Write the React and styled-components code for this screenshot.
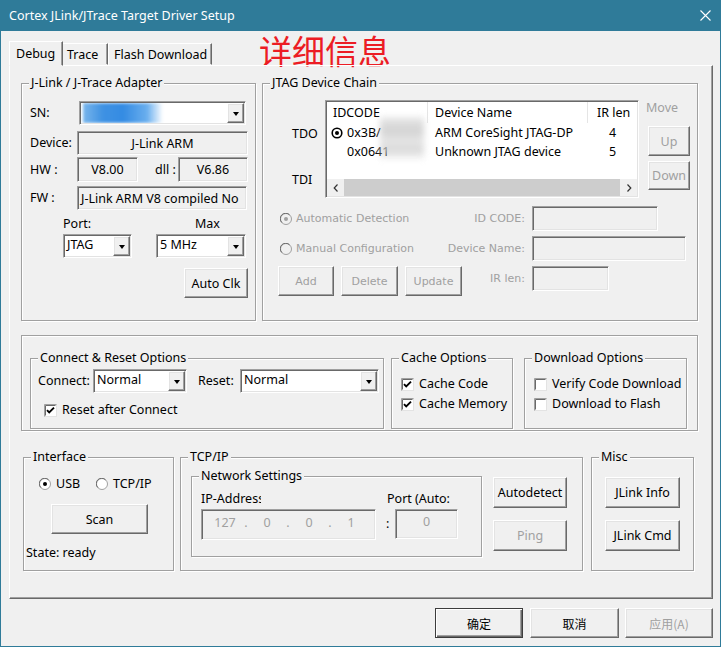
import React from "react";
import styled, { createGlobalStyle, css } from "styled-components";

const GlobalStyle = createGlobalStyle`
  html, body { margin: 0; padding: 0; background: #f0f0f0; }
  body {
    font-family: "Noto Sans", "Noto Sans CJK SC", sans-serif;
    font-size: 12.5px;
    color: #000;
  }
  * { box-sizing: border-box; }
`;

const raised = css`
  border: 1px solid;
  border-color: #fff #696969 #696969 #fff;
  box-shadow: inset -1px -1px #a0a0a0, inset 1px 1px #e3e3e3;
`;

const sunken = css`
  border: 1px solid;
  border-color: #a0a0a0 #fff #fff #a0a0a0;
  box-shadow: inset 1px 1px #696969, inset -1px -1px #e3e3e3;
`;

const Window = styled.div`
  width: 721px;
  height: 647px;
  background: #f0f0f0;
  border: 1px solid #2f7b99;
  border-top: none;
  display: flex;
  flex-direction: column;
`;

const TitleBar = styled.div`
  height: 31px;
  flex: none;
  background: #2f7b99;
  color: #fff;
  display: flex;
  align-items: center;
  justify-content: space-between;
  padding: 0 9px 0 8px;
  font-size: 12.5px;
`;

const Body = styled.div`
  padding: 9px 8px 0 8px;
  display: flex;
  flex-direction: column;
`;

const TabStrip = styled.div`
  display: flex;
  align-items: flex-end;
  height: 25px;
`;

const Tab = styled.div`
  position: relative;
  z-index: ${p => (p.$active ? 1 : 0)};
  width: ${p => p.$w}px;
  height: ${p => (p.$active ? 25 : 22)}px;
  margin-bottom: ${p => (p.$active ? -1 : 0)}px;
  margin-left: ${p => p.$ml || 0}px;
  padding-left: ${p => p.$pl}px;
  background: #f0f0f0;
  border: 1px solid;
  border-color: #fff #696969 transparent #fff;
  box-shadow: inset -1px 0 #a0a0a0;
  display: flex;
  align-items: center;
  padding-top: ${p => (p.$active ? 0 : 1)}px;
  white-space: nowrap;
`;

const Annotation = styled.div`
  margin-left: 47px;
  margin-bottom: 2px;
  font-family: "Noto Sans CJK SC", sans-serif;
  font-size: 33px;
  line-height: 25px;
  color: #ec1c24;
`;

const Panel = styled.div`
  width: 704px;
  height: 534px;
  border: 1px solid;
  border-color: #fff #696969 #696969 #fff;
  box-shadow: inset -1px -1px #a0a0a0;
  padding: 17px 0 0 11px;
  display: flex;
  flex-direction: column;
`;

const Row = styled.div`
  display: flex;
  margin-top: ${p => p.$mt || 0}px;
  margin-left: ${p => p.$ml || 0}px;
`;

const Group = styled.div`
  position: relative;
  flex: none;
  width: ${p => p.$w}px;
  height: ${p => p.$h}px;
  margin-left: ${p => p.$ml || 0}px;
  margin-top: ${p => p.$mt || 0}px;
  border: 1px solid #a0a0a0;
  box-shadow: inset 1px 1px #fff, 1px 1px #fff;
  padding: ${p => p.$pad || "0"};
  display: flex;
  flex-direction: ${p => p.$dir || "column"};
  align-items: flex-start;
`;

const Legend = styled.span`
  position: absolute;
  top: -9px;
  left: 7px;
  padding: 0 2px;
  line-height: 16px;
  background: #f0f0f0;
  white-space: nowrap;
`;

const FormRow = styled.div`
  display: flex;
  align-items: center;
  margin-top: ${p => p.$mt || 0}px;
  margin-left: ${p => p.$ml || 0}px;
`;

const Label = styled.span`
  width: ${p => (p.$w ? `${p.$w}px` : "auto")};
  margin-left: ${p => p.$ml || 0}px;
  margin-top: ${p => p.$mt || 0}px;
  flex: none;
  line-height: ${p => p.$lh || 16}px;
  white-space: nowrap;
  overflow: ${p => (p.$clip ? "hidden" : "visible")};
  text-align: ${p => p.$align || "left"};
  color: ${p => (p.$off ? "#a0a0a0" : "#000")};
  font-family: ${p => (p.$classic ? '"DejaVu Sans", sans-serif' : "inherit")};
  font-size: ${p => (p.$classic ? "11px" : "inherit")};
  padding-right: ${p => p.$pr || 0}px;
  padding-left: ${p => p.$pl || 0}px;
  align-self: ${p => p.$self || "auto"};
`;

const Field = styled.div`
  ${sunken};
  flex: none;
  width: ${p => p.$w}px;
  height: ${p => p.$h || 24}px;
  margin-left: ${p => p.$ml || 0}px;
  margin-top: ${p => p.$mt || 0}px;
  align-self: ${p => p.$self || "auto"};
  background: ${p => p.$bg || "#f0f0f0"};
  display: flex;
  align-items: ${p => p.$valign || "center"};
  justify-content: ${p => (p.$center ? "center" : "flex-start")};
  padding: ${p => p.$pad || "0 3px"};
  overflow: hidden;
  white-space: nowrap;
  color: ${p => (p.$off ? "#a0a0a0" : "#000")};
`;

const Combo = styled.div`
  ${sunken};
  flex: none;
  width: ${p => p.$w}px;
  height: 24px;
  margin-left: ${p => p.$ml || 0}px;
  background: #fff;
  padding: 1px;
  display: flex;
`;

const ComboText = styled.span`
  flex: 1;
  padding-left: 2px;
  line-height: 18px;
  white-space: nowrap;
  overflow: hidden;
`;

const DropButton = styled.span`
  ${raised};
  flex: none;
  width: 17px;
  background: #f0f0f0;
  display: flex;
  align-items: center;
  justify-content: center;
  &::after {
    content: "";
    border-left: 3.5px solid transparent;
    border-right: 3.5px solid transparent;
    border-top: 4px solid #000;
    margin-top: 1px;
  }
`;

const Button = styled.button`
  ${raised};
  flex: none;
  width: ${p => p.$w}px;
  height: ${p => p.$h || 30}px;
  margin-top: ${p => p.$mt || 0}px;
  margin-left: ${p => p.$ml || 0}px;
  padding: 0;
  background: #f0f0f0;
  font-family: ${p => (p.$classic ? '"DejaVu Sans", sans-serif' : '"Noto Sans", "Noto Sans CJK SC", sans-serif')};
  font-size: ${p => (p.$classic ? "11px" : "12.5px")};
  color: ${p => (p.$off ? "#a0a0a0" : "#000")};
  ${p =>
    p.$default &&
    css`
      border: 1px solid #3c3c3c;
      box-shadow: inset 1px 1px #fff, inset -1px -1px #696969, inset -2px -2px #a0a0a0;
    `}
`;

const ChineseButton = styled(Button)`
  font-family: "Noto Sans CJK SC", sans-serif;
  font-size: 12px;
`;

const Blur = styled.span`
  display: inline-block;
  width: 80px;
  height: 20px;
  vertical-align: top;
  background: linear-gradient(90deg, #6aaeea 0%, #2a86e0 25%, #1f7fe0 50%, #5aa6ec 80%, rgba(200, 225, 250, 0) 100%);
  filter: blur(1.5px);
  opacity: 0.9;
`;

const Smudge = styled.span`
  position: absolute;
  left: 53px;
  top: -6px;
  width: 44px;
  height: 44px;
  background: linear-gradient(180deg, #e2e2e2 0%, #c4c4c4 30%, #dedede 55%, #cccccc 75%, rgba(240, 240, 240, 0) 100%);
  filter: blur(3px);
  opacity: 0.75;
`;

/* ---------- icons ---------- */

const CloseIcon = () => (
  <svg width="11" height="11" viewBox="0 0 11 11">
    <path d="M0.5 0.5L10.5 10.5M10.5 0.5L0.5 10.5" stroke="#fff" strokeWidth="1.1" />
  </svg>
);

const RadioIcon = ({ checked, off }) => (
  <svg width="12" height="12" viewBox="0 0 12 12" style={{ flex: "none" }}>
    <circle cx="6" cy="6" r="5.5" fill={off ? "#f0f0f0" : "#fff"} stroke="#a0a0a0" />
    <path d="M1.8 9.5A5 5 0 0 1 9.5 1.8" stroke="#696969" fill="none" />
    {checked && <circle cx="6" cy="6" r="2" fill={off ? "#a0a0a0" : "#000"} />}
  </svg>
);

const ListRadio = () => (
  <svg width="12" height="12" viewBox="0 0 12 12" style={{ flex: "none" }}>
    <circle cx="6" cy="6" r="4.8" fill="#fff" stroke="#000" strokeWidth="1.6" />
    <circle cx="6" cy="6" r="2" fill="#000" />
  </svg>
);

const CheckIcon = ({ checked }) => (
  <svg width="13" height="13" viewBox="0 0 13 13" style={{ flex: "none" }}>
    <rect x="0.5" y="0.5" width="12" height="12" fill="#fff" stroke="#e3e3e3" />
    <path d="M0.5 12.5V0.5H12.5" stroke="#a0a0a0" fill="none" />
    <path d="M1.5 11.5V1.5H11.5" stroke="#696969" fill="none" />
    {checked && <path d="M3 6.2L5.2 8.4L10 3.6" stroke="#000" strokeWidth="1.9" fill="none" />}
  </svg>
);

const Chevron = ({ dir }) => (
  <svg width="6" height="8" viewBox="0 0 6 8">
    <path d={dir === "left" ? "M4.5 0.5L1.2 4L4.5 7.5" : "M1.5 0.5L4.8 4L1.5 7.5"} stroke="#333" strokeWidth="1.2" fill="none" />
  </svg>
);

/* ---------- composite controls ---------- */

const ComboBox = ({ w, ml, children }) => (
  <Combo $w={w} $ml={ml}>
    <ComboText>{children}</ComboText>
    <DropButton />
  </Combo>
);

const OptionItem = styled.label`
  display: flex;
  align-items: center;
  gap: ${p => p.$gap || 5}px;
  width: ${p => (p.$w ? `${p.$w}px` : "auto")};
  margin-top: ${p => p.$mt || 0}px;
  margin-left: ${p => p.$ml || 0}px;
  line-height: 16px;
  white-space: nowrap;
  color: ${p => (p.$off ? "#a0a0a0" : "#000")};
  font-family: ${p => (p.$classic ? '"DejaVu Sans", sans-serif' : "inherit")};
  font-size: ${p => (p.$classic ? "11px" : "inherit")};
`;

/* ---------- list view ---------- */

const ListView = styled.div`
  ${sunken};
  width: 314px;
  height: 98px;
  background: #fff;
  padding: 1px;
  display: flex;
  flex-direction: column;
`;

const ListHeader = styled.div`
  display: flex;
  height: 21px;
  flex: none;
`;

const HeadCell = styled.div`
  width: ${p => p.$w}px;
  flex: ${p => (p.$grow ? 1 : "none")};
  padding-left: ${p => p.$pl}px;
  border-right: ${p => (p.$grow ? "none" : "1px solid #e5e5e5")};
  display: flex;
  align-items: center;
`;

const ListBody = styled.div`
  flex: 1;
  position: relative;
`;

const ListRow = styled.div`
  display: flex;
  height: 19px;
  align-items: center;
`;

const Cell = styled.div`
  width: ${p => p.$w}px;
  flex: ${p => (p.$grow ? 1 : "none")};
  padding-left: ${p => p.$pl || 0}px;
  display: flex;
  align-items: center;
  gap: 4px;
  justify-content: ${p => (p.$center ? "center" : "flex-start")};
  white-space: nowrap;
`;

const HScroll = styled.div`
  height: 17px;
  flex: none;
  background: #f0f0f0;
  display: flex;
`;

const ScrollArrow = styled.div`
  width: 17px;
  flex: none;
  display: flex;
  align-items: center;
  justify-content: center;
`;

const ScrollThumb = styled.div`
  flex: 1;
  background: #cdcdcd;
`;

/* ---------- layout specific ---------- */

const SideLabels = styled.div`
  width: 33px;
  padding-top: 26px;
  display: flex;
  flex-direction: column;
  line-height: 16px;
  gap: 30px;
`;

const MoveColumn = styled.div`
  margin-left: 7px;
  display: flex;
  flex-direction: column;
  align-items: flex-start;
`;

const ChainForm = styled.div`
  display: grid;
  grid-template-columns: 162px 92px auto;
  grid-template-rows: 25px 25px 30px;
  row-gap: 5px;
  align-items: center;
  margin-top: 8px;
  margin-left: 15px;
`;

const ButtonRow = styled.div`
  display: flex;
  gap: 7px;
  align-self: start;
`;

const Frame = styled.div`
  width: 677px;
  height: 96px;
  margin-top: 14px;
  border: 1px solid #a0a0a0;
  box-shadow: inset 1px 1px #fff, 1px 1px #fff;
  padding: 22px 0 0 8px;
  display: flex;
  align-items: flex-start;
`;

const Column = styled.div`
  display: flex;
  flex-direction: column;
  align-items: flex-start;
  margin-top: ${p => p.$mt || 0}px;
  margin-left: ${p => p.$ml || 0}px;
`;

const IpOctet = styled.span`
  width: 38px;
  text-align: center;
`;

const IpDot = styled.span`
  width: 4px;
  text-align: center;
`;

const BottomBar = styled.div`
  display: flex;
  justify-content: flex-end;
  margin-top: 9px;
  margin-right: -1px;
`;

export default function App() {
  return (
    <>
      <GlobalStyle />
      <Window>
        <TitleBar>
          <span>Cortex JLink/JTrace Target Driver Setup</span>
          <CloseIcon />
        </TitleBar>
        <Body>
          <TabStrip>
            <Tab $active $w={54} $pl={6}>Debug</Tab>
            <Tab $w={46} $pl={4} $ml={-1}>Trace</Tab>
            <Tab $w={104} $pl={5}>Flash Download</Tab>
            <Annotation>详细信息</Annotation>
          </TabStrip>

          <Panel>
            {/* adapter + chain */}
            <Row>
              <Group $w={235} $h={238} $pad="17px 0 0 8px">
                <Legend>J-Link / J-Trace Adapter</Legend>
                <FormRow>
                  <Label $w={47}>SN:</Label>
                  <ComboBox w={167} ml={2}>
                    <Blur />
                  </ComboBox>
                </FormRow>
                <FormRow $mt={6}>
                  <Label $w={47}>Device:</Label>
                  <Field $w={171} $center>J-Link ARM</Field>
                </FormRow>
                <FormRow $mt={2}>
                  <Label $w={47}>HW :</Label>
                  <Field $w={61} $h={25} $center $valign="flex-start" $pad="3px 0 0">V8.00</Field>
                  <Label $w={23} $ml={17}>dll :</Label>
                  <Field $w={70} $h={25} $center $valign="flex-start" $pad="3px 0 0">V6.86</Field>
                </FormRow>
                <FormRow $mt={4}>
                  <Label $w={47}>FW :</Label>
                  <Field $w={170}>J-Link ARM V8 compiled No</Field>
                </FormRow>
                <FormRow $mt={6} $ml={33}>
                  <Label $w={132}>Port:</Label>
                  <Label>Max</Label>
                </FormRow>
                <FormRow $mt={2} $ml={33}>
                  <ComboBox w={69}>JTAG</ComboBox>
                  <ComboBox w={90} ml={24}>5 MHz</ComboBox>
                </FormRow>
                <Button $w={64} $mt={10} $ml={154}>Auto Clk</Button>
              </Group>

              <Group $w={436} $h={238} $ml={6} $pad="16px 0 0 0">
                <Legend>JTAG Device Chain</Legend>
                <Row $ml={29}>
                  <SideLabels>
                    <span>TDO</span>
                    <span>TDI</span>
                  </SideLabels>
                  <ListView>
                    <ListHeader>
                      <HeadCell $w={101} $pl={6}>IDCODE</HeadCell>
                      <HeadCell $w={160} $pl={7}>Device Name</HeadCell>
                      <HeadCell $grow $pl={9}>IR len</HeadCell>
                    </ListHeader>
                    <ListBody>
                      <ListRow>
                        <Cell $w={101} $pl={4}>
                          <ListRadio />
                          <span>0x3B/</span>
                        </Cell>
                        <Cell $w={160} $pl={7}>ARM CoreSight JTAG-DP</Cell>
                        <Cell $grow $center>4</Cell>
                      </ListRow>
                      <ListRow>
                        <Cell $w={101} $pl={20}>0x0641</Cell>
                        <Cell $w={160} $pl={7}>Unknown JTAG device</Cell>
                        <Cell $grow $center>5</Cell>
                      </ListRow>
                      <Smudge />
                    </ListBody>
                    <HScroll>
                      <ScrollArrow><Chevron dir="left" /></ScrollArrow>
                      <ScrollThumb />
                      <ScrollArrow><Chevron dir="right" /></ScrollArrow>
                    </HScroll>
                  </ListView>
                  <MoveColumn>
                    <Label $off>Move</Label>
                    <Button $w={42} $h={30} $mt={10} $ml={2} $off>Up</Button>
                    <Button $w={42} $h={29} $mt={5} $ml={2} $off>Down</Button>
                  </MoveColumn>
                </Row>

                <ChainForm>
                  <OptionItem $off $classic $ml={2} $gap={4}>
                    <RadioIcon checked off />
                    Automatic Detection
                  </OptionItem>
                  <Label $off $classic $align="right" $pr={7}>ID CODE:</Label>
                  <Field $w={126} $h={25} />

                  <OptionItem $off $classic $ml={2} $gap={4}>
                    <RadioIcon off />
                    Manual Configuration
                  </OptionItem>
                  <Label $off $classic $align="right" $pr={7}>Device Name:</Label>
                  <Field $w={154} $h={25} />

                  <ButtonRow>
                    <Button $w={56} $off $classic>Add</Button>
                    <Button $w={57} $off $classic>Delete</Button>
                    <Button $w={57} $off $classic>Update</Button>
                  </ButtonRow>
                  <Label $off $classic $align="right" $pr={7} $self="start" $lh={25}>IR len:</Label>
                  <Field $w={77} $h={25} $self="start" />
                </ChainForm>
              </Group>
            </Row>

            {/* options */}
            <Frame>
              <Group $w={354} $h={71} $pad="10px 0 0 7px">
                <Legend>Connect &amp; Reset Options</Legend>
                <FormRow>
                  <Label $w={55}>Connect:</Label>
                  <ComboBox w={94}>Normal</ComboBox>
                  <Label $w={42} $ml={11}>Reset:</Label>
                  <ComboBox w={139}>Normal</ComboBox>
                </FormRow>
                <OptionItem $mt={9} $ml={6}>
                  <CheckIcon checked />
                  Reset after Connect
                </OptionItem>
              </Group>

              <Group $w={122} $h={71} $ml={7} $pad="17px 0 0 9px">
                <Legend>Cache Options</Legend>
                <OptionItem>
                  <CheckIcon checked />
                  Cache Code
                </OptionItem>
                <OptionItem $mt={4}>
                  <CheckIcon checked />
                  Cache Memory
                </OptionItem>
              </Group>

              <Group $w={163} $h={71} $ml={11} $pad="17px 0 0 9px">
                <Legend>Download Options</Legend>
                <OptionItem>
                  <CheckIcon />
                  Verify Code Download
                </OptionItem>
                <OptionItem $mt={4}>
                  <CheckIcon />
                  Download to Flash
                </OptionItem>
              </Group>
            </Frame>

            {/* interface / tcp / misc */}
            <Row $mt={26} $ml={2}>
              <Group $w={151} $h={114} $pad="18px 0 0 2px">
                <Legend>Interface</Legend>
                <FormRow $ml={13}>
                  <OptionItem $w={57}>
                    <RadioIcon checked />
                    USB
                  </OptionItem>
                  <OptionItem>
                    <RadioIcon />
                    TCP/IP
                  </OptionItem>
                </FormRow>
                <Button $w={97} $mt={12} $ml={25}>Scan</Button>
                <Label $mt={11}>State: ready</Label>
              </Group>

              <Group $w={403} $h={114} $ml={6} $dir="row">
                <Legend>TCP/IP</Legend>
                <Group $w={291} $h={81} $ml={10} $mt={18} $pad="14px 0 0 9px" $dir="row">
                  <Legend>Network Settings</Legend>
                  <Column>
                    <Label $w={60} $clip>IP-Address</Label>
                    <Field $w={175} $h={31} $mt={2} $off $valign="flex-start" $pad="4px 0 0 4px">
                      <IpOctet>127</IpOctet>
                      <IpDot>.</IpDot>
                      <IpOctet>0</IpOctet>
                      <IpDot>.</IpDot>
                      <IpOctet>0</IpOctet>
                      <IpDot>.</IpDot>
                      <IpOctet>1</IpOctet>
                    </Field>
                  </Column>
                  <Column $ml={10}>
                    <Label $pl={1}>Port (Auto:</Label>
                    <FormRow $mt={2}>
                      <Label $w={9} $lh={26}>:</Label>
                      <Field $w={63} $h={30} $off $center $valign="flex-start" $pad="3px 0 0">0</Field>
                    </FormRow>
                  </Column>
                </Group>
                <Column $ml={11} $mt={19}>
                  <Button $w={74} $h={31}>Autodetect</Button>
                  <Button $w={74} $h={31} $mt={12} $off>Ping</Button>
                </Column>
              </Group>

              <Group $w={103} $h={114} $ml={8} $pad="19px 0 0 13px">
                <Legend>Misc</Legend>
                <Button $w={75} $h={31}>JLink Info</Button>
                <Button $w={75} $h={31} $mt={12}>JLink Cmd</Button>
              </Group>
            </Row>
          </Panel>

          <BottomBar>
            <ChineseButton $w={88} $default>确定</ChineseButton>
            <ChineseButton $w={89} $ml={7}>取消</ChineseButton>
            <ChineseButton $w={88} $ml={6} $off>应用(A)</ChineseButton>
          </BottomBar>
        </Body>
      </Window>
    </>
  );
}
